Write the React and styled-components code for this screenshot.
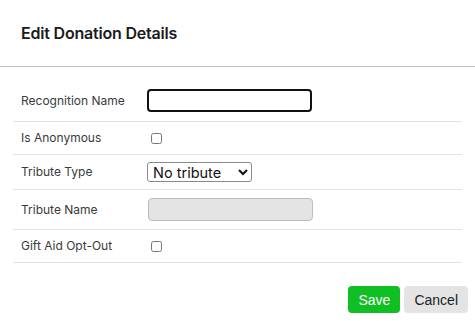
import React from 'react';
import styled, { createGlobalStyle } from 'styled-components';

const GlobalStyle = createGlobalStyle`
  html, body {
    margin: 0;
    padding: 0;
    background: #fff;
  }
  body {
    font-family: Inter, "Liberation Sans", sans-serif;
    color: #222;
  }
`;

const Modal = styled.div`
  width: 475px;
  height: 321px;
  background: #fff;
  box-sizing: border-box;
  display: flex;
  flex-direction: column;
`;

const Header = styled.div`
  height: 67px;
  box-sizing: border-box;
  padding: 0 21px;
  display: flex;
  align-items: center;
  border-bottom: 1px solid #c4c4c4;
`;

const Title = styled.h2`
  margin: 0;
  font-size: 16px;
  font-weight: 600;
  color: #1a1a1a;
  letter-spacing: -0.2px;
`;

const Body = styled.div`
  padding: 13px 13px 0;
`;

const Row = styled.div`
  display: grid;
  grid-template-columns: 134px 1fr;
  align-items: center;
  height: ${(p) => p.$h}px;
  border-bottom: 1px solid #e2e2e2;
`;

const Label = styled.div`
  padding-left: 8px;
  font-size: 12px;
  line-height: 16px;
  color: #3a3a3a;
`;

const Field = styled.div`
  display: flex;
  align-items: center;
  line-height: 0;
`;

const TextInput = styled.input`
  width: 165px;
  height: 23px;
  box-sizing: border-box;
  border-radius: 4px;
  font-family: "Liberation Sans", sans-serif;
  font-size: 13px;
  border: ${(p) => (p.$focused ? '2px solid #111' : '1px solid #bdbdbd')};
  background: ${(p) => (p.disabled ? '#e4e4e4' : '#fff')};
  outline: none;
  margin: 0 0 0 ${(p) => (p.$focused ? '0' : '1px')};
`;

const Check = styled.input`
  margin: 0 0 0 4px;
  width: 11px;
  height: 11px;
`;

const Select = styled.select`
  width: 105px;
  height: 20px;
  box-sizing: border-box;
  font-family: Inter, "Liberation Sans", sans-serif;
  font-size: 14.5px;
  color: #111;
  border: 1px solid #8a8a8a;
  border-radius: 3px;
  padding: 0 1px;
  background: #fff;
`;

const Footer = styled.div`
  display: flex;
  justify-content: flex-end;
  gap: 4px;
  padding: 23px 7px 0 0;
`;

const Button = styled.button`
  height: 27px;
  padding: 0 10px;
  border: none;
  border-radius: 4px;
  font-family: "Liberation Sans", sans-serif;
  font-size: 14px;
  background: ${(p) => (p.$primary ? '#10bf24' : '#e4e4e4')};
  color: ${(p) => (p.$primary ? '#fff' : '#222')};
  cursor: pointer;
`;

export default function App() {
  return (
    <>
      <GlobalStyle />
      <Modal>
        <Header>
          <Title>Edit Donation Details</Title>
        </Header>
        <Body>
          <Row $h={41}>
            <Label>Recognition Name</Label>
            <Field>
              <TextInput type="text" $focused />
            </Field>
          </Row>
          <Row $h={32}>
            <Label>Is Anonymous</Label>
            <Field>
              <Check type="checkbox" />
            </Field>
          </Row>
          <Row $h={34}>
            <Label>Tribute Type</Label>
            <Field>
              <Select defaultValue="none">
                <option value="none">No tribute</option>
                <option value="honor">In honor of</option>
                <option value="memory">In memory of</option>
              </Select>
            </Field>
          </Row>
          <Row $h={39}>
            <Label>Tribute Name</Label>
            <Field>
              <TextInput type="text" disabled />
            </Field>
          </Row>
          <Row $h={32}>
            <Label>Gift Aid Opt-Out</Label>
            <Field>
              <Check type="checkbox" />
            </Field>
          </Row>
        </Body>
        <Footer>
          <Button $primary>Save</Button>
          <Button>Cancel</Button>
        </Footer>
      </Modal>
    </>
  );
}
